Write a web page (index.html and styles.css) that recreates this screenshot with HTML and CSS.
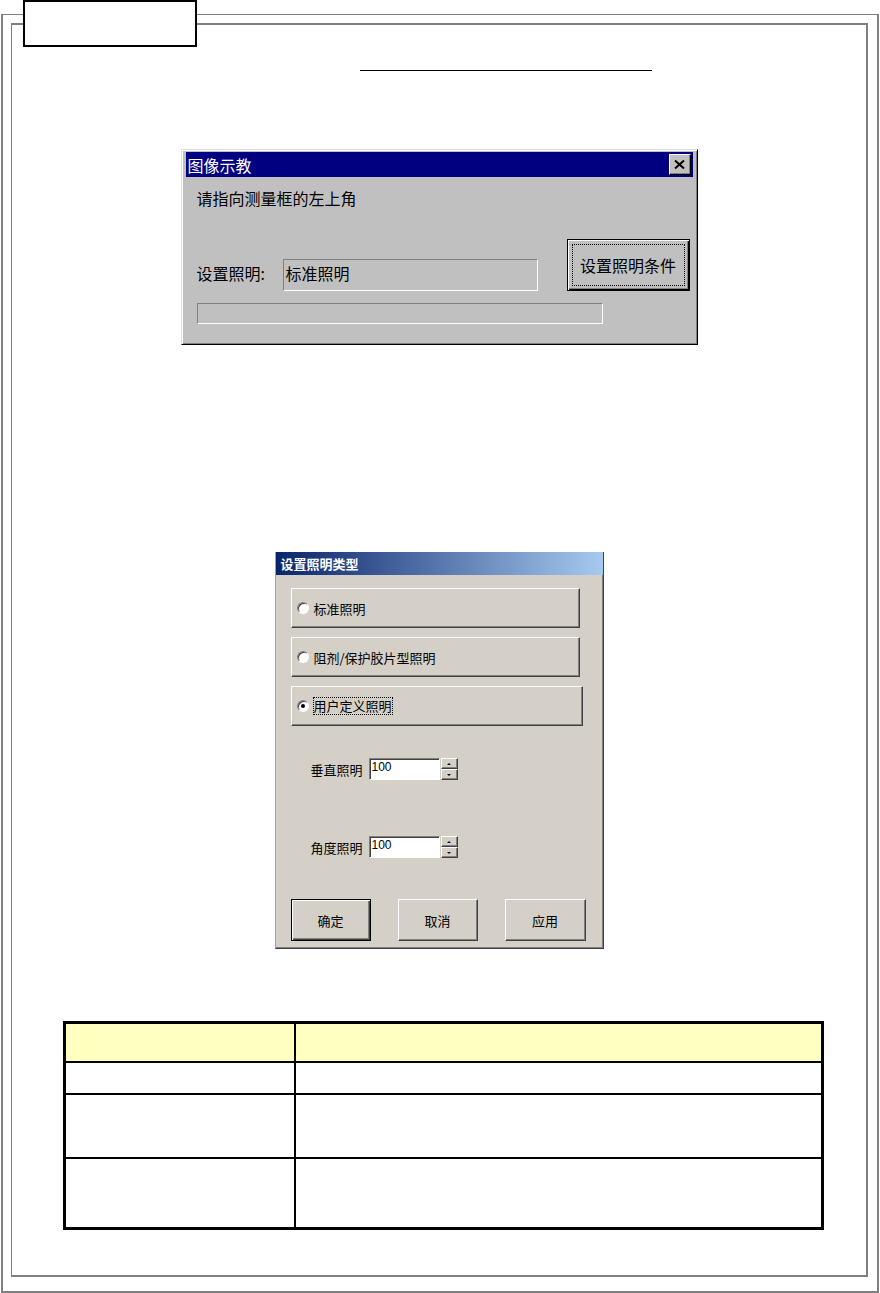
FILE: index.html
```html
<!DOCTYPE html>
<html lang="zh-CN">
<head>
    <meta charset="UTF-8">
    <meta name="viewport" content="width=device-width, initial-scale=1.0">
    <title>图像示教</title>
    <link rel="stylesheet" href="styles.css">
</head>
<body>
    <div class="tab-label"></div>
    <div class="frame">
        <div class="sheet">
            <div class="heading-rule"></div>

            <!-- teaching dialog -->
            <div class="win98 dlg-teach">
                <div class="caption">
                    <span>图像示教</span>
                    <span class="close">
                        <svg width="11" height="9" viewBox="0 0 11 9"><path d="M1 0.5L10 8.5M10 0.5L1 8.5" stroke="#000" stroke-width="2" fill="none"/></svg>
                    </span>
                </div>
                <div class="teach-body">
                    <p class="prompt">请指向测量框的左上角</p>
                    <div class="light-row">
                        <span class="light-label">设置照明:</span>
                        <div class="sunken light-value">标准照明</div>
                        <div class="btn98 default"><span class="focus">设置照明条件</span></div>
                    </div>
                    <div class="sunken progress"></div>
                </div>
            </div>

            <!-- lighting type dialog -->
            <div class="win2k dlg-light">
                <div class="caption2">设置照明类型</div>
                <div class="light-body">
                    <div class="modes">
                        <div class="mode"><span class="radio"></span><span>标准照明</span></div>
                        <div class="mode"><span class="radio"></span><span>阻剂/保护胶片型照明</span></div>
                        <div class="mode wide"><span class="radio checked"></span><span class="focus-text">用户定义照明</span></div>
                    </div>
                    <div class="field first">
                        <span class="field-label">垂直照明</span>
                        <div class="num-input">100</div>
                        <div class="spin">
                            <span class="spin-btn"><i class="up"></i></span>
                            <span class="spin-btn"><i class="down"></i></span>
                        </div>
                    </div>
                    <div class="field second">
                        <span class="field-label">角度照明</span>
                        <div class="num-input">100</div>
                        <div class="spin">
                            <span class="spin-btn"><i class="up"></i></span>
                            <span class="spin-btn"><i class="down"></i></span>
                        </div>
                    </div>
                    <div class="actions">
                        <div class="btn2k default">确定</div>
                        <div class="btn2k">取消</div>
                        <div class="btn2k wide">应用</div>
                    </div>
                </div>
            </div>

            <table class="spec">
                <tr class="row-head"><td></td><td></td></tr>
                <tr class="row-a"><td></td><td></td></tr>
                <tr class="row-b"><td></td><td></td></tr>
                <tr class="row-c"><td></td><td></td></tr>
            </table>
        </div>
    </div>
</body>
</html>
```

FILE: styles.css
```css
body {
    margin: 0;
    background-color: #fff;
    font-family: "Noto Sans CJK SC", sans-serif;
    position: relative;
}

.tab-label {
    position: absolute;
    top: 0;
    left: 23px;
    width: 170px;
    height: 43px;
    border: 2px solid #000;
    background-color: #fff;
}

.frame {
    margin: 14px 0 0 1px;
    width: 874px;
    height: 1276px;
    border: solid #808080;
    border-width: 1px 2px 2px 2px;
}

.sheet {
    margin: 8px 0 0 8px;
    width: 854px;
    height: 1250px;
    border: solid #808080;
    border-width: 2px 2px 2px 1px;
}

.heading-rule {
    margin: 45px 0 0 348px;
    width: 292px;
    border-top: 1px solid #000;
}

/* ---- Win98 style dialog ---- */
.win98 {
    background-color: #c0c0c0;
    border: 1px solid;
    border-color: #dfdfdf #000 #000 #dfdfdf;
    box-shadow: inset 1px 1px #fff, inset -1px -1px #808080;
    padding: 2px 4px 3px 4px;
    box-sizing: border-box;
}

.dlg-teach {
    margin: 78px auto 0;
    width: 517px;
    height: 196px;
}

.caption {
    height: 25px;
    background-color: #000080;
    color: #fff;
    font-size: 16px;
    display: flex;
    align-items: center;
    justify-content: space-between;
    padding: 0 2px;
}

.close {
    width: 22px;
    height: 21px;
    box-sizing: border-box;
    background-color: #c0c0c0;
    border: 1px solid;
    border-color: #fff #000 #000 #fff;
    box-shadow: inset -1px -1px #808080;
    display: flex;
    align-items: center;
    justify-content: center;
}

.teach-body {
    padding: 11px 0 0 11px;
    font-size: 16px;
    color: #000;
}

.prompt {
    margin: 0;
    line-height: 20px;
}

.light-row {
    display: flex;
    align-items: flex-end;
    margin-top: 31px;
}

.light-label {
    width: 86px;
    line-height: 20px;
    margin-bottom: 8px;
}

.sunken {
    border: 1px solid;
    border-color: #808080 #fff #fff #808080;
    box-sizing: border-box;
}

.light-value {
    width: 255px;
    height: 32px;
    margin-right: 29px;
    padding: 3px 2px 0;
    line-height: 20px;
}

.btn98 {
    width: 123px;
    height: 52px;
    box-sizing: border-box;
    border: 1px solid #000;
    box-shadow: inset 1px 1px #fff, inset -1px -1px #000, inset -2px -2px #808080;
    padding: 4px;
    display: flex;
}

.btn98 .focus {
    flex: 1;
    border: 1px dotted #000;
    display: flex;
    align-items: center;
    justify-content: center;
}

.progress {
    margin-top: 12px;
    width: 406px;
    height: 21px;
}

/* ---- Win2000 style dialog ---- */
.win2k {
    background-color: #d4d0c8;
    border: solid;
    border-width: 0 1px 1px 1px;
    border-color: #d4d0c8 #404040 #404040 #a0a0a0;
    box-shadow: inset -1px -1px #808080;
    box-sizing: border-box;
    font-size: 13px;
    color: #000;
}

.dlg-light {
    margin: 207px auto 0;
    width: 329px;
    height: 397px;
}

.caption2 {
    height: 23px;
    background: linear-gradient(to right, #0a246a, #a6caf0);
    color: #fff;
    font-size: 13px;
    font-weight: bold;
    padding-left: 5px;
    display: flex;
    align-items: center;
}

.light-body {
    padding: 13px 0 0 15px;
}

.modes {
    display: flex;
    flex-direction: column;
    gap: 9px;
}

.mode {
    width: 289px;
    height: 40px;
    box-sizing: border-box;
    border: 1px solid;
    border-color: #fff #404040 #404040 #fff;
    box-shadow: inset -1px -1px #808080;
    padding-left: 5px;
    display: flex;
    align-items: center;
    gap: 5px;
}

.mode.wide {
    width: 292px;
}

.radio {
    width: 12px;
    height: 12px;
    box-sizing: border-box;
    border-radius: 50%;
    background-color: #fff;
    border: 1px solid;
    border-color: #808080 #fff #fff #808080;
    box-shadow: inset 1px 1px #404040;
    position: relative;
}

.radio.checked::after {
    content: "";
    position: absolute;
    left: 3px;
    top: 3px;
    width: 4px;
    height: 4px;
    border-radius: 50%;
    background-color: #000;
}

.focus-text {
    outline: 1px dotted #000;
    line-height: 16px;
}

.field {
    display: flex;
    align-items: center;
    padding-left: 20px;
    height: 22px;
}

.field.first {
    margin-top: 32px;
}

.field.second {
    margin-top: 56px;
}

.field-label {
    width: 58px;
}

.num-input {
    width: 71px;
    height: 22px;
    box-sizing: border-box;
    background-color: #fff;
    border: 1px solid;
    border-color: #808080 #fff #fff #808080;
    box-shadow: inset 1px 1px #404040;
    padding: 1px 2px;
    font-family: "Liberation Sans", sans-serif;
    font-size: 12px;
    line-height: 14px;
}

.spin {
    margin-left: 1px;
    display: flex;
    flex-direction: column;
}

.spin-btn {
    width: 17px;
    height: 11px;
    box-sizing: border-box;
    border: 1px solid;
    border-color: #fff #404040 #404040 #fff;
    box-shadow: inset -1px -1px #808080;
    display: flex;
    align-items: center;
    justify-content: center;
}

.spin-btn i {
    width: 0;
    height: 0;
    border-left: 2px solid transparent;
    border-right: 2px solid transparent;
}

.spin-btn .up {
    border-bottom: 2px solid #000;
}

.spin-btn .down {
    border-top: 2px solid #000;
}

.actions {
    display: flex;
    gap: 27px;
    margin-top: 41px;
}

.btn2k {
    width: 80px;
    height: 42px;
    box-sizing: border-box;
    border: 1px solid;
    border-color: #fff #404040 #404040 #fff;
    box-shadow: inset -1px -1px #808080;
    display: flex;
    align-items: center;
    justify-content: center;
}

.btn2k.wide {
    width: 81px;
}

.btn2k.default {
    border-color: #000;
    box-shadow: inset 1px 1px #fff, inset -1px -1px #404040, inset -2px -2px #808080;
}

/* ---- spec table ---- */
.spec {
    margin: 72px 0 0 51px;
    width: 761px;
    border: 3px solid #000;
    border-collapse: separate;
    border-spacing: 0;
}

.spec td {
    padding: 0;
    border-bottom: 2px solid #000;
}

.spec td:first-child {
    width: 228px;
    border-right: 2px solid #000;
}

.spec tr:last-child td {
    border-bottom: 0;
}

.row-head td {
    background-color: #ffffc0;
}

.row-head { height: 39px; }
.row-a { height: 32px; }
.row-b { height: 64px; }
.row-c { height: 68px; }
```
